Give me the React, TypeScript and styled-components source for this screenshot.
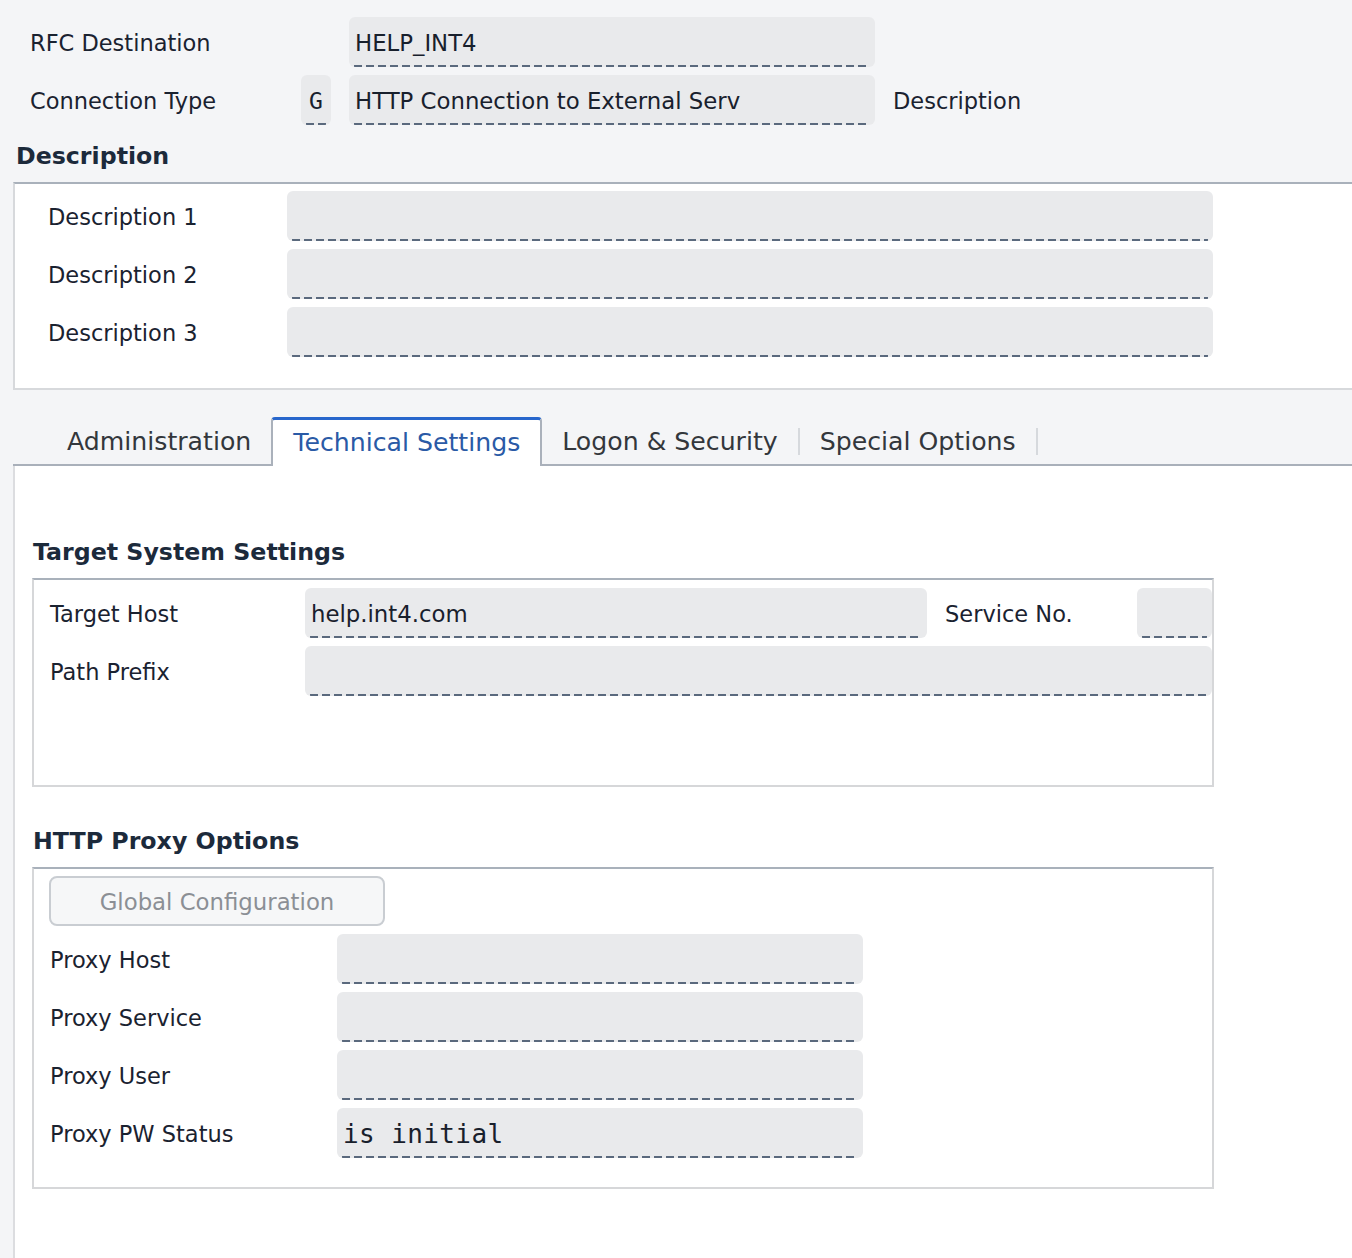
import React from "react";
import styled, { createGlobalStyle } from "styled-components";

const GlobalStyle = createGlobalStyle`
    html, body {
        margin: 0;
        padding: 0;
        background: #f4f5f7;
    }
    body {
        font-family: "DejaVu Sans", "Liberation Sans", sans-serif;
        color: #1a2230;
    }
    * {
        box-sizing: border-box;
    }
`;

const Page = styled.div`
    width: 1352px;
    min-height: 1258px;
    overflow: hidden;
    display: flex;
    flex-direction: column;
`;

const Header = styled.div`
    display: flex;
    flex-direction: column;
    gap: 8px;
    padding: 17px 0 0 30px;
`;

const HeaderRow = styled.div`
    display: flex;
    align-items: center;
`;

const Label = styled.span<{ $width?: number }>`
    font-size: 22.5px;
    line-height: 1;
    padding-top: 2px;
    white-space: nowrap;
    color: #1a2230;
    ${(p) => (p.$width ? `width: ${p.$width}px; flex: none;` : "")}
`;

const SideLabel = styled(Label)`
    margin-left: 18px;
`;

const Field = styled.div<{ $mono?: boolean; $width?: number; $center?: boolean }>`
    position: relative;
    height: 50px;
    background: #e9eaec;
    border-radius: 6px;
    padding: 2px 6px 0;
    display: flex;
    align-items: center;
    justify-content: ${(p) => (p.$center ? "center" : "flex-start")};
    font-family: ${(p) =>
        p.$mono ? `"DejaVu Sans Mono", "Liberation Mono", monospace` : `"DejaVu Sans", sans-serif`};
    font-size: ${(p) => (p.$mono ? "23px" : "22.8px")};
    color: #18202c;
    white-space: nowrap;
    overflow: hidden;
    ${(p) => (p.$width ? `width: ${p.$width}px; flex: none;` : "")}

    &::after {
        content: "";
        position: absolute;
        left: 5px;
        right: 5px;
        bottom: 0;
        height: 2px;
        background: repeating-linear-gradient(
            to right,
            #5a697d 0 8px,
            transparent 8px 12px
        );
    }
`;

const BigMono = styled.span`
    font-family: "DejaVu Sans Mono", "Liberation Mono", monospace;
    font-size: 26px;
    letter-spacing: 0.4px;
`;

const GapSpacer = styled.div`
    width: 48px;
    flex: none;
`;

const SmallGap = styled.div`
    width: 18px;
    flex: none;
`;

const Heading = styled.h2<{ $indent: number; $top: number }>`
    margin: ${(p) => p.$top}px 0 11px ${(p) => p.$indent}px;
    font-size: 23.7px;
    line-height: 30px;
    font-weight: bold;
    color: #1c2a3b;
`;

const DescPanel = styled.div`
    margin-left: 13px;
    background: #fff;
    border-top: 2px solid #a9b1bb;
    border-left: 2px solid #d7d9dc;
    border-bottom: 2px solid #d7d9dc;
    padding: 7px 0 31px 33px;
    display: flex;
    flex-direction: column;
    gap: 8px;
`;

const FormRow = styled.div<{ $cols: string }>`
    display: grid;
    grid-template-columns: ${(p) => p.$cols};
    align-items: center;
`;

const TabBar = styled.div`
    margin: 27px 0 0 13px;
    padding-left: 34px;
    height: 49px;
    display: flex;
    align-items: flex-end;
    border-bottom: 2px solid #a9b0ba;
`;

const Tab = styled.div<{ $active?: boolean }>`
    height: ${(p) => (p.$active ? "49px" : "45px")};
    padding: 0 20px;
    display: flex;
    align-items: center;
    font-size: 25.2px;
    white-space: nowrap;
    color: ${(p) => (p.$active ? "#2a5aa6" : "#33373c")};
    ${(p) =>
        p.$active
            ? `
        background: #fff;
        border-top: 3px solid #2766cc;
        border-left: 2px solid #aab1bb;
        border-right: 2px solid #aab1bb;
        border-radius: 4px 4px 0 0;
        margin-bottom: -2px;
        padding-bottom: 2px;
    `
            : ""}
`;

const TabDivider = styled.div`
    width: 2px;
    height: 27px;
    margin-bottom: 9px;
    background: #d6d9dd;
    flex: none;
`;

const Content = styled.div`
    flex: 1;
    margin-left: 13px;
    background: #fff;
    border-left: 2px solid #dcdde0;
    padding: 71px 0 40px 17px;
`;

const GroupBox = styled.div<{ $pad: string }>`
    width: 1182px;
    background: #fff;
    border-top: 2px solid #a9b1bb;
    border-left: 2px solid #d6d7d9;
    border-right: 2px solid #d6d7d9;
    border-bottom: 2px solid #d6d7d9;
    padding: ${(p) => p.$pad};
    display: flex;
    flex-direction: column;
    gap: 8px;
    overflow: hidden;
`;

const TargetGrid = styled.div`
    display: grid;
    grid-template-columns: 255px 622px 18px 192px 1fr;
    row-gap: 8px;
    align-items: center;
`;

const WideField = styled(Field)`
    grid-column: 2 / -1;
`;

const ConfigButton = styled.button`
    width: 336px;
    height: 50px;
    margin-left: -1px;
    border: 2px solid #c9cdd2;
    border-radius: 8px;
    background: #f6f7f8;
    color: #8b8f95;
    font-family: "DejaVu Sans", sans-serif;
    font-size: 22.8px;
    padding: 2px 0 0;
`;

const descRows = ["Description 1", "Description 2", "Description 3"];
const proxyRows = ["Proxy Host", "Proxy Service", "Proxy User"];
const tabs = [
    { name: "Administration" },
    { name: "Technical Settings", active: true },
    { name: "Logon & Security", divider: true },
    { name: "Special Options", divider: true },
];

export default function App() {
    return (
        <Page>
            <GlobalStyle />
            <Header>
                <HeaderRow>
                    <Label $width={271}>RFC Destination</Label>
                    <GapSpacer />
                    <Field $width={526}>HELP_INT4</Field>
                </HeaderRow>
                <HeaderRow>
                    <Label $width={271}>Connection Type</Label>
                    <Field $width={30} $mono $center>
                        G
                    </Field>
                    <SmallGap />
                    <Field $width={526}>HTTP Connection to External Serv</Field>
                    <SideLabel>Description</SideLabel>
                </HeaderRow>
            </Header>

            <Heading $indent={16} $top={16}>
                Description
            </Heading>
            <DescPanel>
                {descRows.map((r) => (
                    <FormRow key={r} $cols="239px 926px">
                        <Label>{r}</Label>
                        <Field />
                    </FormRow>
                ))}
            </DescPanel>

            <TabBar>
                {tabs.map((t) => (
                    <React.Fragment key={t.name}>
                        <Tab $active={t.active}>{t.name}</Tab>
                        {t.divider && <TabDivider />}
                    </React.Fragment>
                ))}
            </TabBar>

            <Content>
                <Heading $indent={1} $top={0}>
                    Target System Settings
                </Heading>
                <GroupBox $pad="8px 0 89px 16px">
                    <TargetGrid>
                        <Label>Target Host</Label>
                        <Field>help.int4.com</Field>
                        <span />
                        <Label>Service No.</Label>
                        <Field />
                        <Label>Path Prefix</Label>
                        <WideField />
                    </TargetGrid>
                </GroupBox>

                <Heading $indent={1} $top={39}>
                    HTTP Proxy Options
                </Heading>
                <GroupBox $pad="7px 0 29px 16px">
                    <ConfigButton>Global Configuration</ConfigButton>
                    {proxyRows.map((r) => (
                        <FormRow key={r} $cols="287px 526px">
                            <Label>{r}</Label>
                            <Field />
                        </FormRow>
                    ))}
                    <FormRow $cols="287px 526px">
                        <Label>Proxy PW Status</Label>
                        <Field>
                            <BigMono>is initial</BigMono>
                        </Field>
                    </FormRow>
                </GroupBox>
            </Content>
        </Page>
    );
}
